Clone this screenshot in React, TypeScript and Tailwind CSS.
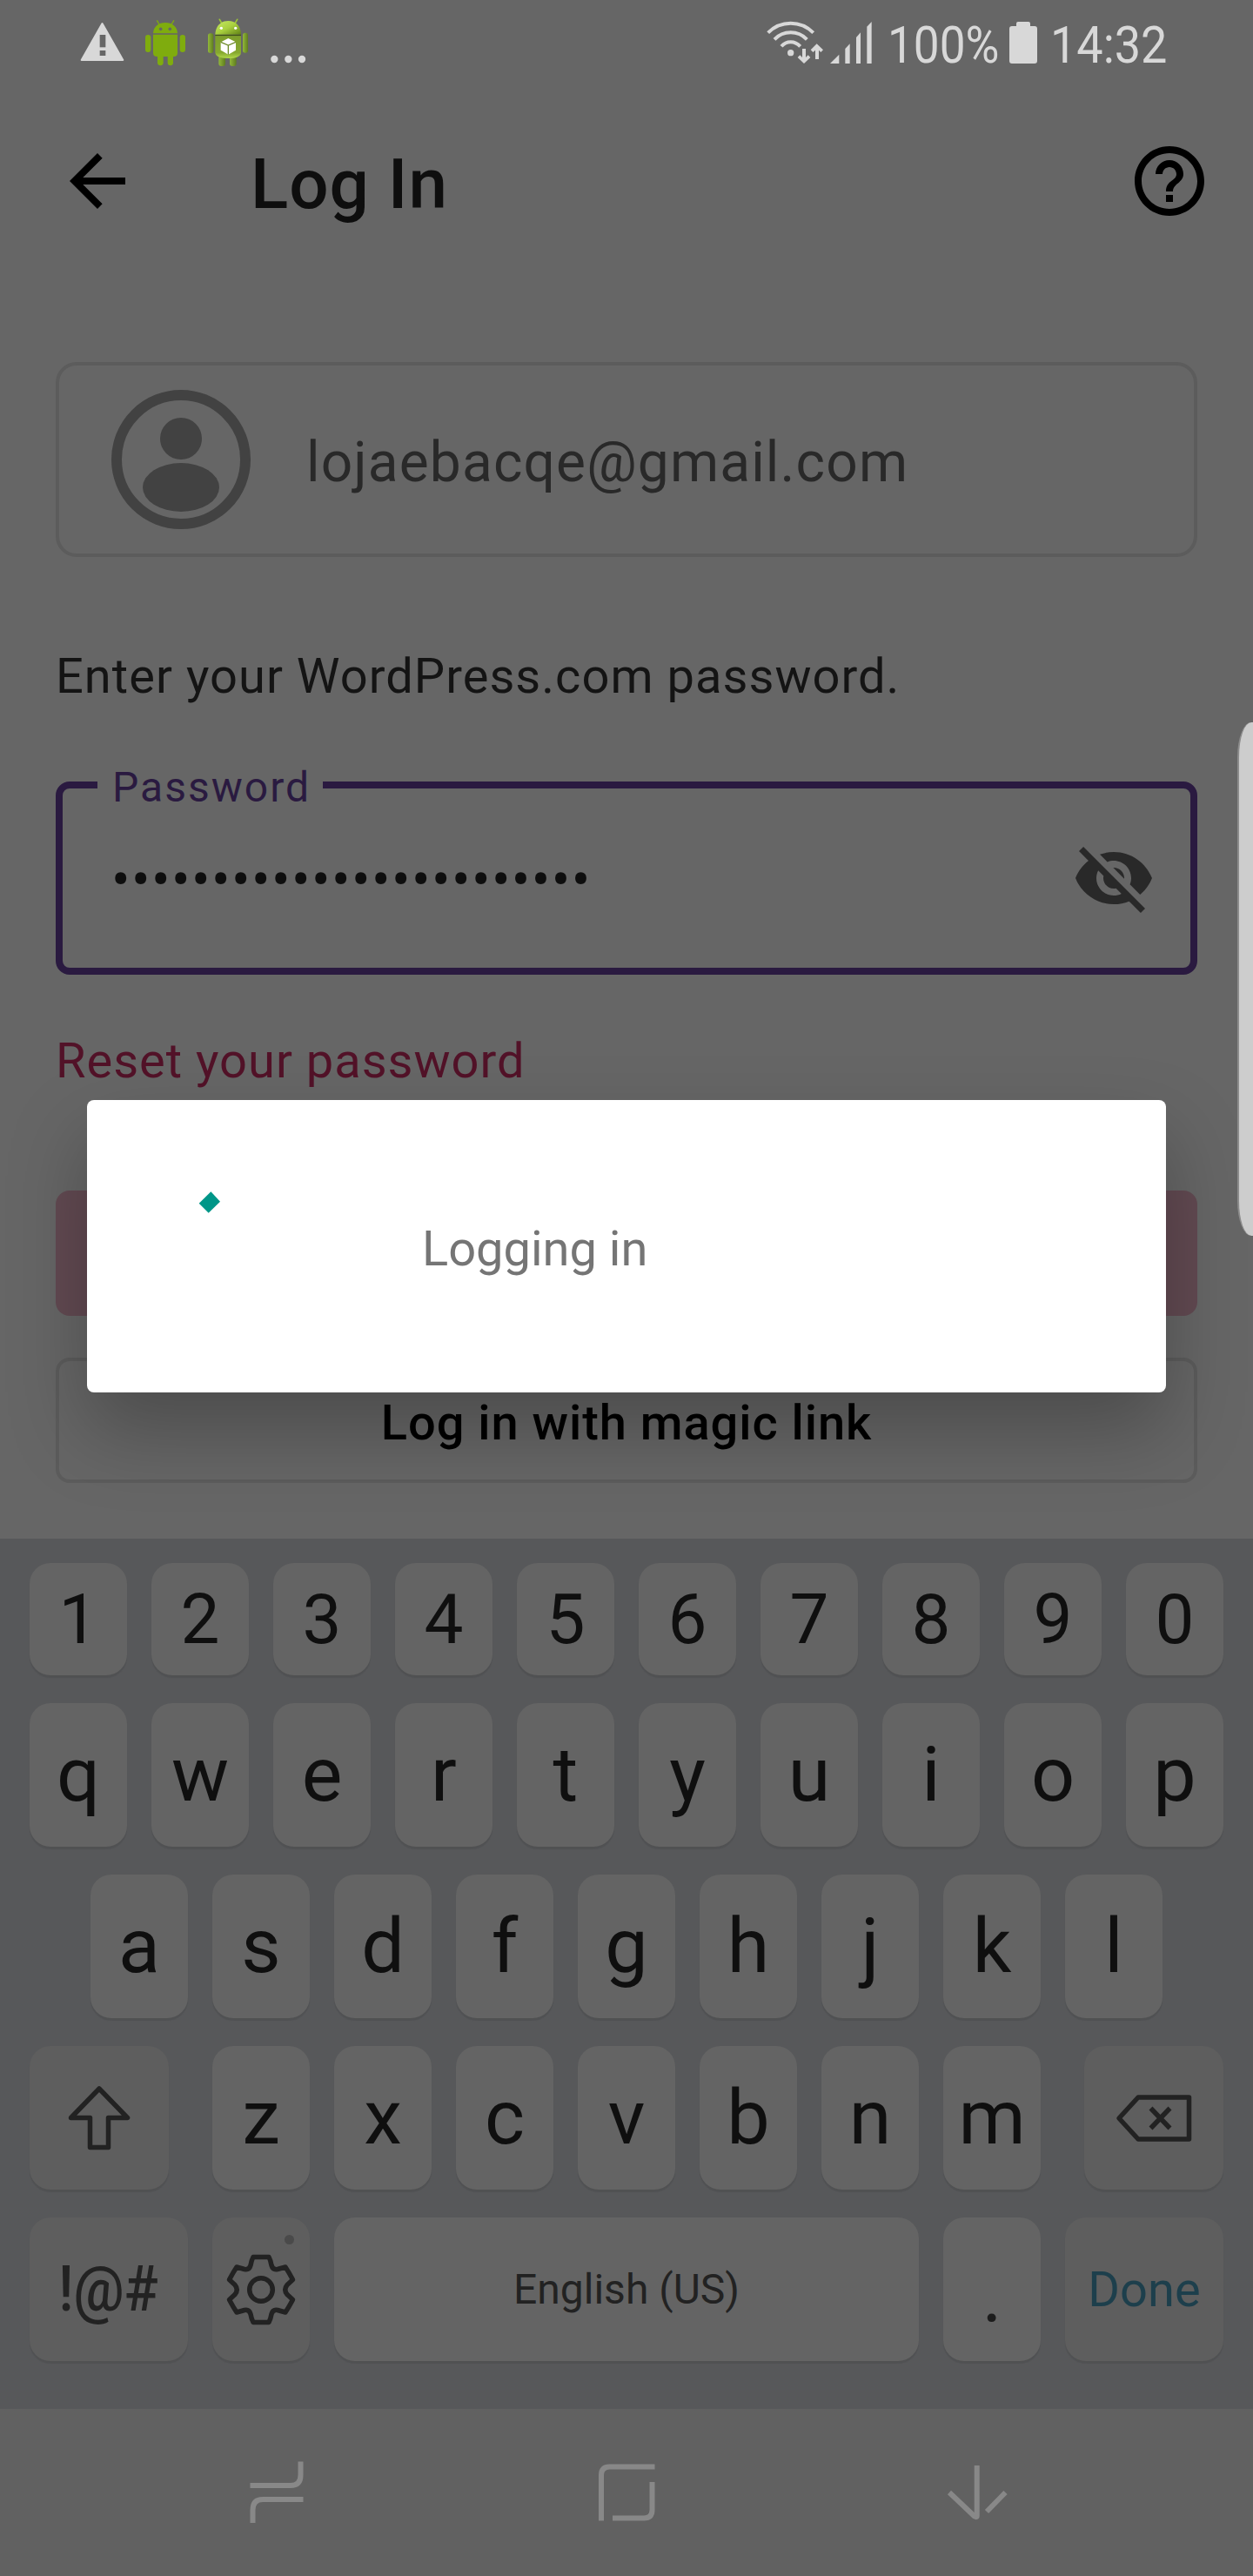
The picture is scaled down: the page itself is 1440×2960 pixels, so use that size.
import type { ReactNode } from "react";

function NotificationIcons() {
  return (
    <svg viewBox="0 0 840 240" className="mt-[10px] h-20 w-[280px] shrink-0">
      <defs>
        <linearGradient id="head" x1="0" y1="0" x2="1" y2="1">
          <stop offset="0" stopColor="#c6ea63" />
          <stop offset="0.5" stopColor="#a9d03f" />
          <stop offset="1" stopColor="#5f8014" />
        </linearGradient>
        <linearGradient id="torso" x1="0" y1="0" x2="0" y2="1">
          <stop offset="0" stopColor="#7d9d2b" />
          <stop offset="0.75" stopColor="#86a82f" />
          <stop offset="1" stopColor="#b0d84a" />
        </linearGradient>
        <linearGradient id="limb" x1="0" y1="0" x2="1" y2="0">
          <stop offset="0" stopColor="#92b83a" />
          <stop offset="1" stopColor="#5f7d1e" />
        </linearGradient>
      </defs>
      <path d="M112.500 51 L184 177 H41 Z" fill="#d8d8d8" stroke="#d8d8d8" strokeWidth="6" strokeLinejoin="round" />
      <rect x="104" y="90" width="20" height="43" fill="#666" />
      <rect x="104" y="144" width="20" height="18" fill="#666" />

      <g fill="#7fac0e">
        <path d="M288 85 C289 61 307 48 330 48 C353 48 371 61 372 85 Z" />
        <path d="M288 89 H372 V152 Q372 165 359 165 H357 V186 Q357 195.500 347.500 195.500 Q338 195.500 338 186 V165 H323 V186 Q323 195.500 313 195.500 Q303 195.500 303 186 V165 H301 Q288 165 288 152 Z" />
        <rect x="261" y="90" width="19" height="60" rx="9.500" />
        <rect x="380" y="90" width="19" height="60" rx="9.500" />
      </g>
      <path d="M301 40 L309 54 M360 40 L351 54" stroke="#7fac0e" strokeWidth="4" />
      <circle cx="314" cy="70" r="5.500" fill="#666" />
      <circle cx="346" cy="70" r="5.500" fill="#666" />

      <path d="M517 37 L525 51 M578 37 L570 51" stroke="#9cc437" strokeWidth="5" strokeLinecap="round" />
      <rect x="514" y="160" width="23" height="38" rx="9" fill="url(#limb)" />
      <rect x="552" y="160" width="23" height="38" rx="9" fill="url(#limb)" />
      <rect x="477" y="85" width="19" height="68" rx="8" fill="url(#limb)" />
      <rect x="597" y="83" width="18" height="69" rx="8" fill="url(#limb)" />
      <path d="M502 89 C503 59 522 42 547 42 C572 42 590 59 591 89 Z" fill="url(#head)" />
      <path d="M502 93 H591 V152 Q588 171 547 171 Q505 171 502 152 Z" fill="url(#torso)" />
      <path d="M502 91.500 H591" stroke="#3f4f1c" strokeWidth="3.500" />
      <circle cx="523" cy="67" r="5" fill="#fff" />
      <circle cx="572" cy="67" r="5" fill="#fff" />
      <path d="M547 102 L573 115 V143 L547 158 L521 143 V115 Z" fill="#fff" />
      <path d="M521 115 L547 126 L573 115 M547 126 V158" fill="none" stroke="#6f8c2b" strokeWidth="4" />

      <circle cx="706" cy="174" r="12.500" fill="#d8d8d8" />
      <circle cx="754" cy="174" r="12.500" fill="#d8d8d8" />
      <circle cx="801" cy="174" r="12.500" fill="#d8d8d8" />
    </svg>
  );
}

function ConnectivityIcons() {
  return (
    <svg viewBox="0 0 450 240" className="mt-[10px] h-20 w-[150px] shrink-0">
      <g fill="none" stroke="#d8d8d8" strokeWidth="12">
        <path d="M38 83 Q71 50.500 116 50.500 Q161 50.500 194 83" />
        <path d="M60 106 Q83 82 116 82 Q149 82 172 106" />
        <path d="M84 130 Q97 114.500 116 114.500 Q135 114.500 149 130" />
      </g>
      <g fill="#d8d8d8">
        <circle cx="116" cy="152" r="11" />
        <path d="M156 138 H168 V168 L176 160 L184 168 L162 189 L140 168 L148 160 L156 168 Z" />
        <path d="M201 174 H213 V143 L220 150 L228 142 L206 121 L185 142 L193 150 L201 143 Z" />
        <path d="M252 189 L283 158 V189 Z" />
        <path d="M304 189 V138 L320 121 V189 Z" />
        <path d="M342 189 V99 L357 82 V189 Z" />
        <path d="M379 189 V62 L395 45 V189 Z" />
      </g>
    </svg>
  );
}

function StatusBar() {
  return (
    <div className="flex h-24 items-start pl-20 text-[60px] leading-none text-[#d8d8d8]">
      <NotificationIcons />
      <div className="w-[510px]" />
      <ConnectivityIcons />
      <div className="mt-[22px] w-[140px] shrink-0">
        <span className="inline-block origin-left scale-x-[0.885]">100%</span>
      </div>
      <svg viewBox="0 0 32 48" className="mt-[25px] h-12 w-8 shrink-0" fill="#d8d8d8">
        <path d="M10 0 H22 Q24 0 24 2 V5 H29 Q32 5 32 8 V45 Q32 48 29 48 H3 Q0 48 0 45 V8 Q0 5 3 5 H8 V2 Q8 0 10 0 Z" />
      </svg>
      <div className="mt-[22px] ml-[15px] shrink-0">
        <span className="inline-block origin-left scale-x-[0.9]">14:32</span>
      </div>
    </div>
  );
}

function Toolbar() {
  return (
    <div className="flex h-56 items-center pr-12 pl-16">
      <svg viewBox="0 0 24 24" className="size-24" fill="#000">
        <path d="M20 11H7.830l5.590-5.590L12 4l-8 8 8 8 1.410-1.410L7.830 13H20v-2z" />
      </svg>
      <h1 className="ml-32 pt-[7px] text-[80px] leading-none font-medium tracking-[1px] text-[#0e0e0e]">Log In</h1>
      <svg viewBox="0 0 24 24" className="ml-auto size-24" fill="#000">
        <path d="M11 18h2v-2h-2v2zm1-16C6.480 2 2 6.480 2 12s4.480 10 10 10 10-4.480 10-10S17.520 2 12 2zm0 18c-4.410 0-8-3.590-8-8s3.590-8 8-8 8 3.590 8 8-3.590 8-8 8zm0-14c-2.210 0-4 1.790-4 4h2c0-1.100.9-2 2-2s2 .9 2 2c0 2-3 1.750-3 5h2c0-2.250 3-2.500 3-5 0-2.210-1.790-4-4-4z" />
      </svg>
    </div>
  );
}

function LoginForm() {
  return (
    <main className="flex h-[1448px] flex-col px-16 pt-24">
      <div className="flex h-56 items-start rounded-[24px] border-4 border-[#5c5c5c] pt-7 pl-[60px]">
        <svg viewBox="0 0 160 160" className="size-40" fill="#424242">
          <circle cx="80" cy="80" r="74" fill="none" stroke="#424242" strokeWidth="12" />
          <circle cx="80" cy="56" r="24" />
          <ellipse cx="80" cy="112" rx="44" ry="28" />
        </svg>
        <p className="mt-[52px] ml-16 text-[64px] leading-none tracking-[1.15px] text-[#292929]">lojaebacqe@gmail.com</p>
      </div>

      <p className="mt-[109px] text-[56px] leading-none tracking-[1.04px] text-[#141414]">
        Enter your WordPress.com password.
      </p>

      <div className="relative mt-[93px] flex h-[222px] items-center justify-between rounded-[16px] border-8 border-[#2a1a40] pr-10 pl-[56px]">
        <label className="absolute -top-[25px] left-10 h-12 bg-[#666] pr-[14px] pl-[17px] text-[48px] leading-none tracking-[2px] text-[#2a1a40]">
          Password
        </label>
        <p className="pt-[6px] text-[64px] leading-none tracking-[1.4px] text-[#0e0e0e]">••••••••••••••••••••••••</p>
        <svg viewBox="0 0 24 24" className="size-24" fill="#292929">
          <path d="M12 7c2.760 0 5 2.240 5 5 0 .65-.13 1.260-.36 1.830l2.920 2.920c1.510-1.260 2.700-2.890 3.430-4.750-1.730-4.390-6-7.500-11-7.500-1.400 0-2.740.25-3.980.7l2.160 2.160C10.740 7.130 11.350 7 12 7zM2 4.270l2.280 2.280.46.46C3.080 8.300 1.780 10.020 1 12c1.730 4.390 6 7.500 11 7.500 1.550 0 3.030-.3 4.380-.84l.42.42L19.730 22 21 20.730 3.270 3 2 4.270zM7.530 9.800l1.550 1.550c-.05.21-.08.43-.08.65 0 1.660 1.340 3 3 3 .22 0 .44-.03.65-.08l1.550 1.550c-.67.33-1.410.53-2.200.53-2.760 0-5-2.240-5-5 0-.79.2-1.530.53-2.200zm4.310-.78l3.150 3.150.02-.16c0-1.660-1.340-3-3-3l-.17.01z" />
        </svg>
      </div>

      <p className="mt-[71px] text-[56px] leading-none tracking-[1px] text-[#521228]">Reset your password</p>

      <div className="mt-[121px] h-36 shrink-0 rounded-[16px] bg-[#624a52]" />
      <div className="mt-12 flex h-36 shrink-0 items-center justify-center rounded-[16px] border-4 border-[#5c5c5c] pt-[5px] text-[56px] leading-none font-medium tracking-[0.95px] text-black">
        Log in with magic link
      </div>
    </main>
  );
}

const keyBase =
  "relative flex shrink-0 items-center justify-center rounded-[24px] leading-none shadow-[0_3px_1px_rgba(0,0,0,0.08)]";

function Key({ className, children }: { className: string; children: ReactNode }) {
  return <div className={`${keyBase} ${className}`}>{children}</div>;
}

function LetterRow({ letters }: { letters: string }) {
  return (
    <div className="flex justify-center gap-7">
      {letters.split("").map((c) => (
        <Key key={c} className="h-[165px] w-28 bg-[#646464] pb-[2px] text-[88px] text-[#0f0f0f]">
          {c}
        </Key>
      ))}
    </div>
  );
}

function Keyboard() {
  return (
    <div className="flex h-[1000px] flex-col gap-8 bg-[#57585a] px-[34px] pt-7 text-[#0f0f0f]">
      <div className="flex justify-center gap-7">
        {"1234567890".split("").map((c) => (
          <Key key={c} className="h-[129px] w-28 bg-[#646464] text-[80px]">
            {c}
          </Key>
        ))}
      </div>
      <LetterRow letters="qwertyuiop" />
      <LetterRow letters="asdfghjkl" />
      <div className="flex justify-between">
        <Key className="h-[165px] w-40 bg-[#5e5e5e]">
          <svg viewBox="0 0 80 80" className="size-20" fill="none" stroke="#222" strokeWidth="5.500" strokeLinejoin="round">
            <path d="M40 6 L72.500 39.500 H50.500 V73.500 H29.500 V39.500 H7.500 Z" />
          </svg>
        </Key>
        <LetterRow letters="zxcvbnm" />
        <Key className="h-[165px] w-40 bg-[#5e5e5e]">
          <svg viewBox="0 0 88 56" className="h-14 w-[88px]" fill="none" stroke="#222" strokeWidth="5.500" strokeLinejoin="round">
            <path d="M4 28 L26 4 H84.500 V52 H26 Z" />
            <path d="M40.500 16.500 L62.500 39.500 M62.500 16.500 L40.500 39.500" />
          </svg>
        </Key>
      </div>
      <div className="flex gap-7">
        <Key className="h-[165px] w-[182px] bg-[#5e5e5e] text-[72px] text-[#222]">
          <span className="inline-block scale-x-[0.9] font-medium">!@#</span>
        </Key>
        <Key className="h-[165px] w-28 bg-[#5e5e5e]">
          <svg viewBox="-42 -42 84 84" className="size-[84px]" fill="none" stroke="#222" strokeWidth="5.500" strokeLinejoin="round">
            <path d="M-9 -37.500 H9 Q11 -34 12 -28 Q13.500 -22.500 19 -23.500 L28 -26 Q32 -20 36.500 -11.500 L30 -5.500 Q25.500 0 30 5.500 L36.500 11.500 Q32 20 28 26 L19 23.500 Q13.500 22.500 12 28 Q11 34 9 37.500 H-9 Q-11 34 -12 28 Q-13.500 22.500 -19 23.500 L-28 26 Q-32 20 -36.500 11.500 L-30 5.500 Q-25.500 0 -30 -5.500 L-36.500 -11.500 Q-32 -20 -28 -26 L-19 -23.500 Q-13.500 -22.500 -12 -28 Q-11 -34 -9 -37.500 Z" />
            <circle r="13.300" />
          </svg>
          <span className="absolute top-5 right-[18px] size-[11px] rounded-full bg-[#4a4a4a]" />
        </Key>
        <Key className="h-[165px] w-[672px] bg-[#646464] text-[48px] text-[#222]">English (US)</Key>
        <Key className="h-[165px] w-28 bg-[#646464] pt-[13px] text-[88px] text-[#1c1c1c]">.</Key>
        <Key className="h-[165px] w-[182px] bg-[#5e5e5e] text-[56px] text-[#1d3f4c]">Done</Key>
      </div>
    </div>
  );
}

function NavigationBar() {
  return (
    <nav className="flex h-48 items-center justify-between bg-[#616161] px-[278px]">
      <svg viewBox="0 0 80 80" className="size-20" fill="none" stroke="#888" strokeWidth="6">
        <path d="M67.500 4.500 V20 Q67.500 32 56 32 H9.500" />
        <path d="M12.500 75 V60 Q12.500 48 24 48 H70.500" />
      </svg>
      <svg viewBox="0 0 80 80" className="size-20" fill="none" stroke="#888" strokeWidth="6">
        <path d="M11 72.500 V20 Q11 10.500 20.500 10.500 H72.500" />
        <path d="M69.500 28 V60 Q69.500 69.500 60 69.500 H24" />
      </svg>
      <svg viewBox="0 0 80 80" className="size-20" fill="none" stroke="#888" strokeWidth="6">
        <path d="M40.700 9 V67 Q40.700 69 38 67.500 L9 40" strokeLinejoin="round" />
        <path d="M73.500 40 L52 62" />
      </svg>
    </nav>
  );
}

export default function App() {
  return (
    <div className="relative flex h-[2960px] w-[1440px] flex-col overflow-hidden bg-[#666] font-['Roboto',sans-serif]">
      <StatusBar />
      <Toolbar />
      <LoginForm />
      <Keyboard />
      <NavigationBar />

      <div className="absolute top-[1264px] left-[100px] flex h-[336px] w-[1240px] rounded-[8px] bg-white shadow-[0_43px_90px_rgba(0,0,0,0.26)]">
        <svg viewBox="0 0 40 40" className="mt-[96px] ml-[120px] size-10" fill="#009688">
          <path d="M8.700 22.700 L22.400 9.300 L33 20.700 L19.700 33.700 Z" />
        </svg>
        <p className="mt-[143px] ml-[225px] text-[56px] leading-none text-[#757575]">Logging in</p>
      </div>

      <div className="absolute top-[830px] right-0 h-[590px] w-[18px] rounded-l-[16px_40px] border-l-2 border-[#8c8c8c] bg-[#cdcdcd]" />
    </div>
  );
}
